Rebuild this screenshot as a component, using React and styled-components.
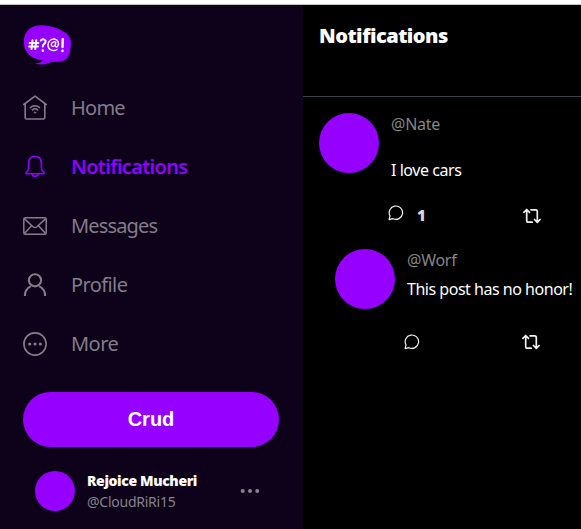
import React from "react";
import styled, { createGlobalStyle } from "styled-components";

const GlobalStyle = createGlobalStyle`
  * { box-sizing: border-box; }
  body { margin: 0; overflow: hidden; background: #fff; font-family: "Noto Sans", "Open Sans", sans-serif; }
`;

const Page = styled.div`
  height: 529px;
  padding-top: 4px;
`;
const Layout = styled.div`
  display: grid;
  grid-template-columns: 303px 1fr;
  height: 525px;
  border-top: 1px solid #c4c4c4;
  background: #000;
  overflow: hidden;
`;
const Sidebar = styled.aside`
  display: flex;
  flex-direction: column;
  padding: 18px 24px 0 23px;
  background: #0d0219;
`;
const Nav = styled.nav`
  display: flex;
  flex-direction: column;
  margin-top: 7px;
`;
const NavItem = styled.a`
  display: flex;
  align-items: center;
  gap: 24px;
  height: 59px;
  color: ${(p) => (p.$active ? "#8f00ff" : "#847c8b")};
  font-size: 20px;
  line-height: 28px;
  font-weight: ${(p) => (p.$active ? 600 : 400)};
  svg { flex: none; }
`;
const Label = styled.span`
  letter-spacing: ${(p) => p.$spacing || 0}px;
  white-space: nowrap;
`;
const CrudButton = styled.button`
  flex: none;
  height: 55px;
  margin-top: 19px;
  padding: 0;
  border: 0;
  border-radius: 28px;
  background: #9500ff;
  color: #fff;
  font: bold 20px "Liberation Sans", Arial, sans-serif;
`;
const Account = styled.div`
  display: flex;
  align-items: center;
  margin-top: 24px;
  padding: 0 19px 0 12px;
  height: 40px;
  color: #85838d;
`;
const Avatar = styled.div`
  flex: none;
  width: ${(p) => p.$size}px;
  height: ${(p) => p.$size}px;
  border-radius: 50%;
  background: #9500ff;
`;
const AccountText = styled.div`
  display: flex;
  flex-direction: column;
  flex: 1;
  margin-left: 12px;
  font-size: 14px;
  line-height: 21px;
`;
const AccountName = styled(Label)`
  color: #fff;
  font-weight: 900;
`;
const Main = styled.main`
  display: flex;
  flex-direction: column;
  min-width: 0;
`;
const Header = styled.header`
  height: 92px;
  padding: 17px 16px;
  border-bottom: 1px solid #38404b;
`;
const Title = styled.h1`
  margin: 0;
  color: #fff;
  font-family: "Open Sans", "Noto Sans", sans-serif;
  font-size: 20px;
  font-weight: 800;
  line-height: 28px;
  letter-spacing: ${(p) => p.$spacing}px;
`;
const Post = styled.article`
  display: flex;
  gap: 12px;
  height: ${(p) => (p.$reply ? 120 : 136)}px;
  padding: ${(p) => (p.$reply ? "16px 0 0 32px" : "16px 0 0 16px")};
`;
const PostBody = styled.div`
  display: flex;
  flex-direction: column;
  min-width: 0;
  font-size: 16px;
  line-height: 24px;
`;
const Handle = styled(Label)`
  margin-top: -1px;
  color: #858585;
`;
const Message = styled(Label)`
  margin-top: ${(p) => p.$gap}px;
  color: #fff;
`;
const Actions = styled.div`
  display: flex;
  margin: ${(p) => p.$top}px 0 0 -3px;
  color: #f2f2f2;
  svg { flex: none; }
`;
const Replies = styled.div`
  display: flex;
  gap: 12px;
  width: ${(p) => p.$width}px;
`;
const Count = styled.span`
  margin-top: -2px;
  color: #d3d8dd;
  font-size: 15px;
  font-weight: 900;
  line-height: 24px;
`;
const Repost = styled.div`
  padding-top: ${(p) => p.$top}px;
  line-height: 0;
`;

const LogoSvg = styled.svg`
  flex: none;
  display: block;
`;

const Logo = () => (
  <LogoSvg width="50" height="48" viewBox="0 0 50 48" fill="none">
    <path fill="#9500ff" d="M.7 19C.7 8.600 8 2 18 2.200 29 2 48 8.500 48 19c0 3-.2 5.500-.7 8.400-.7 6-4.300 10.300-9.300 11.100-4 .500-7.500-.100-10.300.8C22.700 42.300 16.500 42 11.500 40.500c3.500 0 6.500-1 8.500-3C8.500 36.500.7 29 .7 19Z" />
    <g stroke="#fff" strokeLinecap="round" strokeWidth="2">
      <path d="M9.500 17.300 8.500 26M13.300 17.300 12.300 26M6.600 20h8.800M6.200 23.600h8.800" />
      <path d="M17.800 17.500c1.700-2.100 5-1.200 4.800 1.100-.2 2.200-2.800 2.200-2.800 5" />
      <path d="M39.700 16.300 39.500 24" strokeWidth="2.400" />
      <path d="M34 26.500c-3.800 2.500-9.300.3-9-4.800.2-3.500 3-6 6.300-5.700 4.200.4 5 4.700 3.500 7-1.500 1.800-3.100.6-2.500-1.500l.5-2.200c-1.300-1.200-4.200-.2-4.500 2.100-.3 2.600 2.900 2.600 4 .4" strokeWidth="1.400" />
      <path d="M19.800 27.500v.2M39.500 27.800v.2" strokeWidth="2.500" />
    </g>
  </LogoSvg>
);
const HomeIcon = () => (
  <svg width="24" height="26" viewBox="0 0 24 26" fill="none" stroke="currentColor" strokeWidth="1.600" strokeLinecap="round" strokeLinejoin="round">
    <path d="M.8 9.500 12 1.200 23.200 9.500M2.200 9v13.600q0 1.400 1.400 1.400h16.800q1.400 0 1.400-1.400V9" />
    <path d="M7.500 12.500c2.500-2.300 6.500-2.300 9 0M9.500 14.900c1.400-1.300 3.600-1.300 5 0" />
    <circle cx="12" cy="17.500" r=".8" fill="currentColor" strokeWidth=".6" />
  </svg>
);
const BellIcon = () => (
  <svg width="24" height="24" viewBox="0 0 24 24" fill="none" stroke="currentColor" strokeWidth="1.600" strokeLinejoin="round">
    <path d="M12 1.200C8 1.200 5.600 4.100 5.600 8v4.400c0 2.100-.8 3.700-2.200 4.800-.8.600-.6 1.600.4 1.600h16.400c1 0 1.200-1 .4-1.600-1.400-1.100-2.200-2.700-2.200-4.800V8c0-3.900-2.400-6.800-6.400-6.800Z" />
    <path d="M9 19c.3 1.500 1.300 2.300 3 2.300s2.700-.8 3-2.300" />
  </svg>
);
const MailIcon = () => (
  <svg width="24" height="18" viewBox="0 0 24 18" fill="none" stroke="currentColor" strokeWidth="1.500" strokeLinejoin="round">
    <rect x=".8" y=".8" width="22.400" height="16.400" rx="1.500" />
    <path d="m1 1.400 9 8.300q2 1.700 4 0l9-8.300M1.200 16.800l7.300-8M22.800 16.800l-7.300-8" />
  </svg>
);
const ProfileIcon = () => (
  <svg width="24" height="24" viewBox="0 0 24 24" fill="none" stroke="currentColor" strokeWidth="2.100">
    <circle cx="12" cy="7.300" r="6.100" />
    <path d="M1.900 23c0-4.800 2.400-8.100 6-9.900M22.100 23c0-4.800-2.400-8.100-6-9.900" />
  </svg>
);
const MoreIcon = () => (
  <svg width="24" height="24" viewBox="0 0 24 24">
    <circle cx="12" cy="12" r="11.100" fill="none" stroke="currentColor" strokeWidth="1.600" />
    {[6.7, 12, 17.3].map((x) => <circle key={x} cx={x} cy="12" r="1.600" fill="currentColor" />)}
  </svg>
);
const DotsIcon = () => (
  <svg width="20" height="6" viewBox="0 0 20 6" fill="currentColor">
    {[2.7, 10, 17.2].map((x) => <circle key={x} cx={x} cy="3" r="2" />)}
  </svg>
);
const ChatIcon = () => (
  <svg width="17" height="17" viewBox="0 0 17 17" fill="none" stroke="currentColor" strokeWidth="1.200" strokeLinejoin="round">
    <path d="M2 10.900A6.700 6.700 0 1 1 4.900 13.700L1.100 14.600Z" />
  </svg>
);
const RepostIcon = () => (
  <svg width="18" height="16" viewBox="0 0 18 16" fill="none" stroke="currentColor" strokeWidth="1.700" strokeLinecap="round" strokeLinejoin="round">
    <path d="M.9 4.300 3.700 1.500l2.800 2.800M3.700 1.800V12.500q0 1.700 1.700 1.700h3.800M8 1.800h4.600q1.700 0 1.700 1.700v10.500M11.500 11.500l2.800 2.800 2.800-2.800" />
  </svg>
);

const navItems = [
  { text: "Home", Icon: HomeIcon, spacing: -0.75 },
  { text: "Notifications", Icon: BellIcon, active: true, spacing: -0.7 },
  { text: "Messages", Icon: MailIcon, spacing: -0.85 },
  { text: "Profile", Icon: ProfileIcon, spacing: -0.6 },
  { text: "More", Icon: MoreIcon, spacing: -0.55 },
];

export default function App() {
  return (
    <>
      <GlobalStyle />
      <Page>
        <Layout>
          <Sidebar>
            <Logo />
            <Nav>
              {navItems.map(({ text, Icon, active, spacing }) => (
                <NavItem key={text} $active={active}>
                  <Icon />
                  <Label $spacing={spacing}>{text}</Label>
                </NavItem>
              ))}
            </Nav>
            <CrudButton>Crud</CrudButton>
            <Account>
              <Avatar $size={40} />
              <AccountText>
                <AccountName $spacing={-0.37}>Rejoice Mucheri</AccountName>
                <Label $spacing={-0.25}>@CloudRiRi15</Label>
              </AccountText>
              <DotsIcon />
            </Account>
          </Sidebar>
          <Main>
            <Header>
              <Title $spacing={-0.5}>Notifications</Title>
            </Header>
            <Post>
              <Avatar $size={60} />
              <PostBody>
                <Handle $spacing={-0.25}>@Nate</Handle>
                <Message $gap={22} $spacing={-0.45}>I love cars</Message>
                <Actions $top={23}>
                  <Replies $width={135}>
                    <ChatIcon />
                    <Count>1</Count>
                  </Replies>
                  <Repost $top={3}><RepostIcon /></Repost>
                </Actions>
              </PostBody>
            </Post>
            <Post $reply>
              <Avatar $size={60} />
              <PostBody>
                <Handle $spacing={-0.25}>@Worf</Handle>
                <Message $gap={5} $spacing={-0.48}>This post has no honor!</Message>
                <Actions $top={33}>
                  <Replies $width={118}>
                    <ChatIcon />
                  </Replies>
                  <Repost $top={0}><RepostIcon /></Repost>
                </Actions>
              </PostBody>
            </Post>
          </Main>
        </Layout>
      </Page>
    </>
  );
}
